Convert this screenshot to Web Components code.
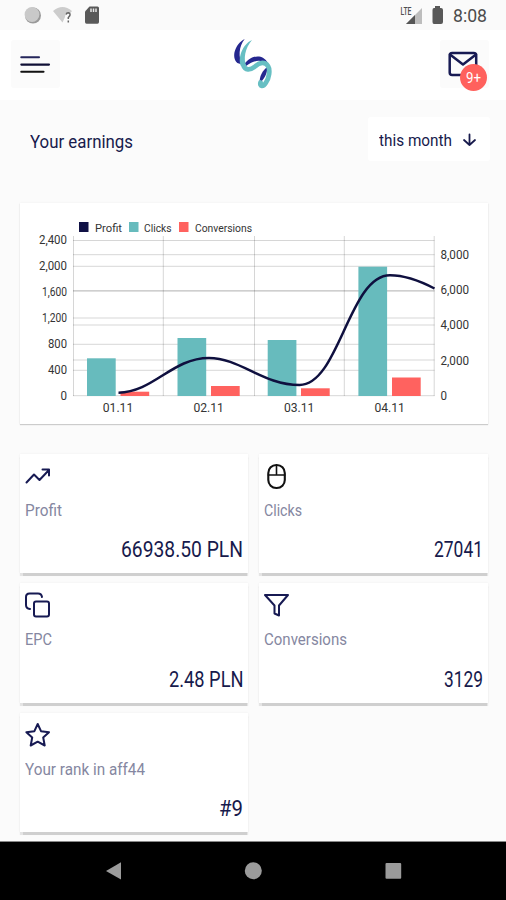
<!DOCTYPE html>
<html lang="en"><head><meta charset="utf-8"><title>Your earnings</title>
<style>
html,body{margin:0;height:100%}
body{font-family:Roboto,"Liberation Sans",sans-serif;color:#171a4c;background:#fbfbfb;overflow:hidden}
</style></head><body>
<earnings-app></earnings-app>
<script>
const define=(name,html,setup)=>customElements.define(name,class extends HTMLElement{
  connectedCallback(){
    if(this.shadowRoot)return;
    const t=document.createElement('template');t.innerHTML=html;
    this.attachShadow({mode:'open'}).append(t.content.cloneNode(true));
    if(setup)setup(this,this.shadowRoot);
  }
});

/* One line of text condensed or widened to the width in its "w" attribute. */
define('fit-text',`<style>
:host{display:block;white-space:nowrap;flex:none}
span{display:inline-block;transform-origin:0 50%}
</style><span><slot></slot></span>`,(host,root)=>{
  const s=root.querySelector('span'),w=+host.getAttribute('w');
  const natural=s.getBoundingClientRect().width;
  host.style.width=w+'px';
  if(natural)s.style.transform=`scaleX(${w/natural})`;
});

define('status-bar',`<style>
:host{display:flex;justify-content:space-between;height:30px;background:#fafafa;color:#555}
svg{display:block}
.r{display:flex;padding-right:19px}
fit-text{font-size:17.5px;line-height:32px;color:#4c4c4c}
</style>
<svg width="110" height="30"><circle cx="33" cy="15.5" r="8" fill="#999"/><circle cx="32" cy="14.5" r="7.4" fill="#c9c9c9"/>
<path d="M53 11Q62.500 3 72 11L70 13.500Q65 13 65 17L62.500 22.500Z" fill="#ccc"/><path d="M66.200 14.500Q66.500 12.800 68.200 12.800Q70.300 13 70 15Q69.700 16.300 68.300 17.500V19M68.300 20.500V22.500" fill="none" stroke="#666" stroke-width="1.500"/>
<path d="M89.500 6.500H97.500Q99 6.500 99 8V22Q99 23.800 97.500 23.800H86.500Q85 23.800 85 22V11.500Z" fill="#595959"/><path d="M91 8.500V12M93.500 8.500V12M96 8.500V12" stroke="#e6e6e6" stroke-width="1.500"/></svg>
<div class="r"><svg width="54" height="30"><text x="1.500" y="14.500" font-size="10" font-family="Roboto,sans-serif" font-weight="500" fill="#505050" textLength="11" lengthAdjust="spacingAndGlyphs">LTE</text>
<path d="M23 8V24H7Z" fill="#bdbdbd"/><path d="M16 15V24H7Z" fill="#555"/><path d="M36 6H41V8H42Q44 8 44 10V22Q44 24 42 24H35Q33.500 24 33.500 22V10Q33.500 8 35 8H36Z" fill="#585858"/></svg>
<fit-text w="34">8:08</fit-text></div>`);

define('tile-button',`<style>
:host{display:grid;place-items:center;box-sizing:border-box;position:relative;background:#fbfbfb;border-radius:3px;width:49px;height:48px}
</style><slot></slot>`);

define('count-badge',`<style>
:host{position:absolute;left:20px;top:24px;width:27px;height:27px;border-radius:50%;background:#ff615d;color:#fff;font-size:15px;line-height:26px;display:grid;place-items:center}
</style><fit-text w="15"><slot></slot></fit-text>`);

define('brand-logo',`<style>:host{display:block}svg{display:block}</style>
<svg width="46" height="54" viewBox="230 38 46 54">
<path d="M244.700 39C235 44 231 57 237.300 63L242 64.500C238.500 57 238.500 47 244.700 39Z" fill="#25278f"/>
<path d="M244.500 64C250 56 262 52.500 268 63L263 61.500C257 59.500 252 62 246 66Z" fill="#25278f"/>
<path d="M267.500 67C262.500 70 259 77 259.700 83C264 79 267 75 267.500 67Z" fill="#25278f"/>
<path d="M252 40C242 44.500 237.500 59 241 66L246.500 66.500C243 59 245 48 252 40Z" fill="#67bfc3"/>
<path d="M243.300 65C245 70.500 250 70.500 255 66.500C260 62 265 61.500 268 66C270.500 70 269 78 266 82.500C263 87.500 259.500 86.500 260.500 82.500" fill="none" stroke="#67bfc3" stroke-width="4.800" stroke-linecap="round" stroke-linejoin="round"/>
</svg>`);

define('app-header',`<style>
:host{display:flex;align-items:flex-start;justify-content:space-between;height:70px;box-sizing:border-box;padding:10px 17px 0 11px;background:#fff}
brand-logo{margin:-2px 0 0 5px}
svg{display:block}
</style>
<tile-button><svg width="49" height="48" viewBox="11 40 49 48" fill="none" stroke-width="2.100" stroke-linecap="round"><path d="M21.300 57.200H39" stroke="#25265b"/><path d="M21.300 64.600H49" stroke="#101036"/><path d="M21.300 71.800H43.500" stroke="#111"/></svg></tile-button>
<brand-logo></brand-logo>
<tile-button><svg width="49" height="48" viewBox="440 40 49 48" fill="none" stroke="#171a53" stroke-width="2.500" stroke-linejoin="round" stroke-linecap="round"><rect x="449.700" y="53" width="26.500" height="22" rx="2.500"/><path d="M450 54.500L463 64.500L476 54.500"/></svg><count-badge>9+</count-badge></tile-button>`);

define('section-bar',`<style>
:host{display:flex;justify-content:space-between;align-items:flex-start;height:103px;box-sizing:border-box;padding:17px 16px 0 30px}
.t{font-size:18.500px;line-height:50px}
.period{display:flex;align-items:center;gap:10px;width:122px;height:44px;box-sizing:border-box;padding:2px 0 0 11px;background:#fff;border-radius:3px;font-size:17px}
</style>
<fit-text class="t" w="103">Your earnings</fit-text>
<div class="period"><fit-text w="73">this month</fit-text><svg width="15" height="16" fill="none" stroke="#171a4c" stroke-width="1.800" stroke-linecap="round" stroke-linejoin="round"><path d="M7.500 2.500V13M2 8L7.500 13L13 8"/></svg></div>`);

define('earnings-chart',`<style>
:host{display:block;margin:0 18px 0 20px;height:221px;background:#fff;box-shadow:0 1px 1px #ccc,0 0 2px #eee}
svg{display:block;font:12px Roboto,"Liberation Sans",sans-serif}
</style><svg width="468" height="221" viewBox="20 203 468 221"></svg>`,(host,root)=>{
  const p=[];
  const text=(s,x,y,w,a='start',size=12)=>p.push(`<text x="${x}" y="${y}" text-anchor="${a}" font-size="${size}" fill="#343434" textLength="${w}" lengthAdjust="spacingAndGlyphs">${s}</text>`);
  const line=(x1,y1,x2,y2)=>p.push(`<path d="M${x1} ${y1}L${x2} ${y2}" stroke="#000" stroke-opacity=".16"/>`);
  [240.5,266.3,291.3,318,344.3,370.3,395.7,254.700,290.500,325,360].forEach(y=>line(73,y,434.500,y));
  [73.5,163.3,254.500,344.3,434.2].forEach(x=>line(x,236,x,396));
  [['#101145',79,'Profit',95,27],['#67bbbd',129,'Clicks',144,27.500],['#ff625f',179,'Conversions',195,57]].forEach(([c,x,s,tx,w])=>{
    p.push(`<rect x="${x}" y="222" width="9.500" height="10" fill="${c}"/>`);text(s,tx,231.500,w,'start',11.500);
  });
  [['2,400',244,28],['2,000',270,28],['1,600',296,25],['1,200',322,25],['800',348,19],['400',374,19],['0',399.700,6.5]].forEach(([s,y,w])=>text(s,67,y,w,'end'));
  [['8,000',259],['6,000',294],['4,000',329],['2,000',364.500]].forEach(([s,y])=>text(s,440.500,y,28.500));
  text('0',440.500,399.700,6.5);
  [['01.11',118],['02.11',208.700],['03.11',299.200],['04.11',389.700]].forEach(([s,x])=>text(s,x,412,30.500,'middle'));
  [[87,358.3,120.5,391.7],[177.500,338,211,386],[267.700,340,301,388.300],[358.400,266.700,392,377.500]].forEach(([x,y,x2,y2])=>
    p.push(`<rect x="${x}" y="${y}" width="28.700" height="${396-y}" fill="#67bbbd"/><rect x="${x2}" y="${y2}" width="28.700" height="${396-y2}" fill="#ff625f"/>`));
  p.push('<path d="M118.500 392.700C154 392 172 358 209 358C240 358 263 385 299.500 385C339 385 349 275.300 390 275.300C405 275.300 420 281 434.500 288.500" fill="none" stroke="#0f103f" stroke-width="2.500"/>');
  root.querySelector('svg').innerHTML=p.join('');
});

define('stat-card',`<style>
:host{display:flex;flex-direction:column;box-sizing:border-box;height:119.500px;padding:9px 5px 0;background:#fff;box-shadow:0 2.500px 1px #cfcfcf,0 0 2px #eee}
::slotted(svg){display:block;flex:none;fill:none;stroke:#171a53;stroke-width:2;stroke-linecap:round;stroke-linejoin:round}
.label{font-size:16.500px;line-height:24px;color:#8587a1;margin-top:9px}
.value{font-size:21.500px;line-height:26px;align-self:flex-end;margin-top:14.500px}
</style><slot name="icon"></slot><fit-text class="label"></fit-text><fit-text class="value"></fit-text>`,(host,root)=>{
  for(const k of ['label','value']){
    const old=root.querySelector('.'+k),n=document.createElement('fit-text');
    n.className=k;n.textContent=host.getAttribute(k);n.setAttribute('w',host.getAttribute(k+'-w'));
    old.replaceWith(n);
  }
});

define('stat-grid',`<style>
:host{display:grid;grid-template-columns:228px 228.500px;gap:10px 11px;padding:29.500px 18px 0 20px}
</style>
<stat-card label="Profit" label-w="37" value="66938.50 PLN" value-w="122"><svg slot="icon" width="26" height="27"><path d="M1.500 19.500L9 11.500L14.500 17L23.500 7.500M17.500 6.500H24V12.500"/></svg></stat-card>
<stat-card label="Clicks" label-w="38" value="27041" value-w="49"><svg slot="icon" width="26" height="27" style="stroke:#111;stroke-width:2.100"><rect x="4.300" y="2" width="16.500" height="23" rx="8"/><path d="M4.300 12H20.800M12.500 3V11" stroke-width="1.600"/></svg></stat-card>
<stat-card label="EPC" label-w="27" value="2.48 PLN" value-w="74.500"><svg slot="icon" width="26" height="27"><rect x="9" y="9.500" width="15" height="15" rx="2"/><path d="M5 17Q1 16.500 1 13V5Q1 1.500 4.500 1.500H13Q16.500 1.500 17 5"/></svg></stat-card>
<stat-card label="Conversions" label-w="83" value="3129" value-w="39"><svg slot="icon" width="26" height="27"><path d="M1 3H24L15 13.500V23.500L10.500 21.500V13.500Z"/></svg></stat-card>
<stat-card label="Your rank in aff44" label-w="120" value="#9" value-w="24"><svg slot="icon" width="26" height="27"><path d="M12.700 2L16 9.200L24 10.200L18.200 15.500L19.700 23.500L12.700 19.700L5.700 23.500L7.200 15.500L1.400 10.200L9.400 9.200Z"/></svg></stat-card>`);

define('nav-bar',`<style>
:host{display:block;height:59px;box-sizing:border-box;border-top:1px solid #888;background:#000}
svg{display:block}
</style><svg width="506" height="58" viewBox="0 842 506 58" fill="#9b9b9b"><path d="M106 871L121 862.300V879.500Z"/><circle cx="253.300" cy="870.800" r="8.500"/><rect x="385.500" y="863" width="15.700" height="15.700" rx="1"/></svg>`);

define('earnings-app',`<style>
:host{display:flex;flex-direction:column;width:506px;height:900px}
status-bar,app-header,section-bar,earnings-chart,stat-grid,nav-bar{flex:none}
nav-bar{margin-top:auto}
</style>
<status-bar></status-bar><app-header></app-header><section-bar></section-bar><earnings-chart></earnings-chart><stat-grid></stat-grid><nav-bar></nav-bar>`);
</script></body></html>
